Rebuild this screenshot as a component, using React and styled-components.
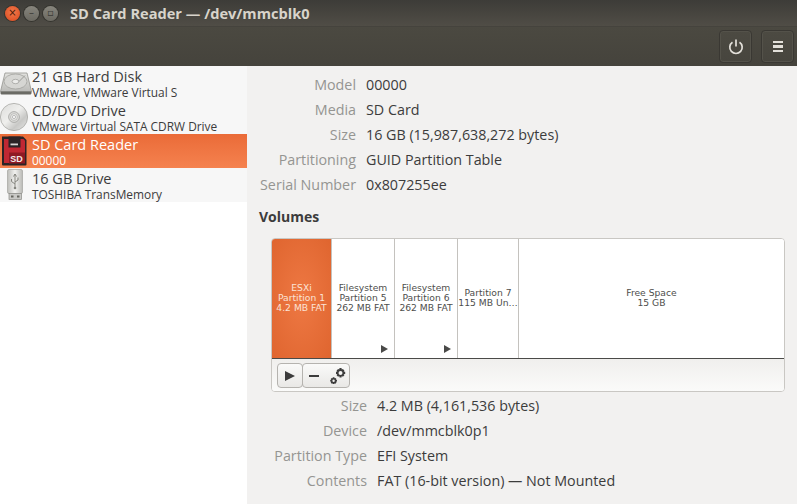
import React from "react";
import styled, { createGlobalStyle } from "styled-components";

const GlobalStyle = createGlobalStyle`
  html, body {
    margin: 0;
    padding: 0;
    height: 100%;
    overflow: hidden;
    background: #f2f1f0;
  }
  #root { height: 100%; }
`;

const drives = [
  { icon: "hdd", name: "21 GB Hard Disk", sub: "VMware, VMware Virtual S" },
  { icon: "disc", name: "CD/DVD Drive", sub: "VMware Virtual SATA CDRW Drive" },
  { icon: "sd", name: "SD Card Reader", sub: "00000", active: true },
  { icon: "usb", name: "16 GB Drive", sub: "TOSHIBA TransMemory" },
];

const driveInfo = [
  ["Model", "00000"],
  ["Media", "SD Card"],
  ["Size", "16 GB (15,987,638,272 bytes)"],
  ["Partitioning", "GUID Partition Table"],
  ["Serial Number", "0x807255ee"],
];

const volumeInfo = [
  ["Size", "4.2 MB (4,161,536 bytes)"],
  ["Device", "/dev/mmcblk0p1"],
  ["Partition Type", "EFI System"],
  ["Contents", "FAT (16-bit version) — Not Mounted"],
];

const segments = [
  { w: 60, lines: ["ESXi", "Partition 1", "4.2 MB FAT"], active: true },
  { w: 63, lines: ["Filesystem", "Partition 5", "262 MB FAT"], arrow: true },
  { w: 63, lines: ["Filesystem", "Partition 6", "262 MB FAT"], arrow: true },
  { w: 61, lines: ["Partition 7", "115 MB Un…"] },
  { w: 265, lines: ["Free Space", "15 GB"], last: true },
];

const HddIcon = () => (
  <svg width="32" height="32" viewBox="0 0 32 32">
    <defs>
      <linearGradient id="hddTop" x1="0" y1="0" x2="0" y2="1">
        <stop offset="0" stopColor="#e2e2df" />
        <stop offset="1" stopColor="#bcbcb9" />
      </linearGradient>
    </defs>
    <path d="M5 6h22l4.500 18.500H.5z" fill="url(#hddTop)" stroke="#94948f" strokeWidth=".8" />
    <ellipse cx="15.500" cy="14.500" rx="11.500" ry="7.500" fill="#d6d6d3" stroke="#a2a29e" strokeWidth=".8" />
    <ellipse cx="15.500" cy="14.500" rx="3.400" ry="2.200" fill="#ececea" stroke="#9a9a96" strokeWidth=".7" />
    <path d="M25 8.500l-6 6" stroke="#9a9a96" strokeWidth="1" fill="none" />
    <path d="M.5 24.500h31v1.500c0 1-1 1.500-1.500 1.500H2c-.7 0-1.500-.5-1.500-1.500z" fill="#6a6a64" />
  </svg>
);

const DiscIcon = () => (
  <svg width="32" height="32" viewBox="0 0 32 32">
    <defs>
      <linearGradient id="discFace" x1="0" y1="0" x2="1" y2="1">
        <stop offset="0" stopColor="#dcdcda" />
        <stop offset=".45" stopColor="#efefed" />
        <stop offset=".7" stopColor="#c8c8c6" />
        <stop offset="1" stopColor="#e8e8e6" />
      </linearGradient>
    </defs>
    <circle cx="14" cy="16" r="13.600" fill="url(#discFace)" stroke="#a8a8a5" strokeWidth=".8" />
    <circle cx="14" cy="16" r="5.400" fill="#dcdcda" stroke="#a2a29f" strokeWidth=".8" />
    <circle cx="14" cy="16" r="3.400" fill="#ececea" stroke="#adadaa" strokeWidth=".7" />
    <circle cx="14" cy="16" r="1.600" fill="#f7f7f6" stroke="#98989a" strokeWidth=".6" />
  </svg>
);

const SdIcon = () => (
  <svg width="32" height="32" viewBox="0 0 32 32">
    <path d="M2 1.500h21l3.500 3.500v24.500a1 1 0 0 1-1 1H3a1 1 0 0 1-1-1z" fill="#2b2326" />
    <path d="M4 4h19.500L25 5.500V28H4z" fill="#c02733" />
    <rect x="8.500" y="1.500" width="12" height="11" fill="#2b2326" />
    <rect x="10.500" y="8.500" width="7.500" height="1.800" fill="#d8d4d4" />
    <rect x="9" y="17.500" width="16" height="11" fill="#8f1a24" />
    <text x="16.500" y="27.200" textAnchor="middle" fontFamily="Liberation Sans, sans-serif" fontWeight="700" fontSize="9" fill="#f4e8e8">SD</text>
  </svg>
);

const UsbIcon = () => (
  <svg width="32" height="32" viewBox="0 0 32 32">
    <defs>
      <linearGradient id="usbBody" x1="0" y1="0" x2="1" y2="0">
        <stop offset="0" stopColor="#bdbdb9" />
        <stop offset=".5" stopColor="#f2f2f0" />
        <stop offset="1" stopColor="#b9b9b5" />
      </linearGradient>
    </defs>
    <rect x="7.500" y=".5" width="15" height="24" rx="1.500" fill="url(#usbBody)" stroke="#a5a5a1" strokeWidth=".7" />
    <path d="M15 5v13M15 5l-1.500 2.500M15 5l1.500 2.500M15 15l-3.500-2.500V10M15 13l3-2V8.500" stroke="#85857f" strokeWidth="1" fill="none" />
    <circle cx="15" cy="19" r="1.300" fill="#85857f" />
    <rect x="9" y="24.500" width="12.500" height="6" fill="#c9c9c6" stroke="#8a8a86" strokeWidth=".7" />
    <rect x="11" y="26.500" width="2.500" height="2" fill="#66665f" />
    <rect x="17" y="26.500" width="2.500" height="2" fill="#66665f" />
  </svg>
);

const driveIcons = { hdd: HddIcon, disc: DiscIcon, sd: SdIcon, usb: UsbIcon };

const PowerIcon = () => (
  <svg width="16" height="16" viewBox="0 0 16 16" fill="none" stroke="#e3e0da" strokeWidth="1.700">
    <path d="M4.500 3.200a6.200 6.200 0 1 0 7 0" />
    <path d="M8 .5v7" />
  </svg>
);

const GearsIcon = () => (
  <svg width="16" height="16" viewBox="0 0 16 16" fill="#3c3c3c">
    <path fillRule="evenodd" d="M9.500 0h2l.3 1.500 1.100-.6 1.500 1.500-.7 1.100 1.500.3v2.100l-1.500.3.700 1.100-1.500 1.500-1.100-.7-.3 1.500h-2l-.3-1.500-1.100.7-1.500-1.500.7-1.100L6 5.900V3.800l1.300-.3-.7-1.100 1.500-1.500 1.100.6zM10.500 2.900a2 2 0 1 0 0 4 2 2 0 0 0 0-4z" />
    <path fillRule="evenodd" d="M2.800 9.300h1.600l.2 1 .8-.4 1.100 1.100-.5.800 1 .2v1.600l-1 .2.500.8-1.100 1.100-.8-.5-.2 1H2.800l-.2-1-.8.5L.7 14.600l.5-.8-1-.2V12l1-.2-.5-.8L1.800 9.900l.8.400zM3.600 11.600a1.200 1.200 0 1 0 0 2.400 1.200 1.200 0 0 0 0-2.400z" />
  </svg>
);

const Window = styled.div`
  display: flex;
  flex-direction: column;
  width: 797px;
  height: 504px;
  overflow: hidden;
  font-family: "Open Sans", "Noto Sans", sans-serif;
`;

const TitleBar = styled.div`
  display: flex;
  align-items: center;
  gap: 4px;
  height: 27px;
  flex: none;
  padding-left: 5px;
  background: linear-gradient(#3d3c38, #504d46);
  border-bottom: 1px solid #45433d;
  box-sizing: border-box;
`;

const WindowButton = styled.span`
  display: flex;
  align-items: center;
  justify-content: center;
  width: 15px;
  height: 15px;
  border-radius: 50%;
  font-family: "DejaVu Sans", sans-serif;
  font-size: 10px;
  line-height: 1;
  color: ${(p) => (p.$close ? "#4a1a08" : "#3b3a36")};
  background: ${(p) =>
    p.$close
      ? "radial-gradient(circle at 50% 40%, #f2794c, #d8481c)"
      : "linear-gradient(#87857d, #6b6961)"};
  box-shadow: 0 0 0 1px #35342f;
`;

const Title = styled.div`
  margin-left: 8px;
  font-size: 14.600px;
  font-weight: 700;
  color: #d8d4cb;
  white-space: nowrap;
`;

const HeaderBar = styled.div`
  display: flex;
  align-items: center;
  justify-content: flex-end;
  gap: 9px;
  height: 39px;
  flex: none;
  padding-right: 3px;
  box-sizing: border-box;
  background: linear-gradient(#4b4941, #45433c);
`;

const HeaderButton = styled.div`
  display: flex;
  align-items: center;
  justify-content: center;
  width: 33px;
  height: 33px;
  box-sizing: border-box;
  border: 1px solid #3a3833;
  border-radius: 4px;
  background: linear-gradient(#4c4a42, #47453e);
  box-shadow: inset 0 0 0 1px #54524a;
`;

const MenuBars = styled.div`
  display: flex;
  flex-direction: column;
  gap: 2px;

  span {
    display: block;
    width: 10px;
    height: 2.500px;
    background: #e3e0da;
  }
`;

const Body = styled.div`
  display: flex;
  flex: 1;
  min-height: 0;
  background: #f2f1f0;
`;

const Sidebar = styled.div`
  width: 247px;
  flex: none;
  background: #ffffff;
`;

const DriveRow = styled.div`
  display: flex;
  align-items: center;
  height: 34px;
  background: ${(p) => (p.$active ? "linear-gradient(#ea6b38, #f5824f)" : "#f7f7f7")};
  color: ${(p) => (p.$active ? "#ffffff" : "#3c3c3c")};
`;

const DriveIcon = styled.div`
  display: flex;
  width: 32px;
  height: 32px;
  flex: none;
`;

const DriveText = styled.div`
  display: flex;
  flex-direction: column;
  padding-top: 1px;
  white-space: nowrap;
`;

const DriveName = styled.div`
  font-size: 14.500px;
  line-height: 16px;
`;

const DriveSub = styled.div`
  font-size: 11.900px;
  line-height: 14px;
`;

const Details = styled.div`
  flex: 1;
  min-width: 0;
  padding: 6px 12px 0;
`;

const InfoGrid = styled.div`
  display: grid;
  grid-template-columns: ${(p) => p.$label}px 1fr;
  column-gap: 10px;
  grid-auto-rows: 25px;
  align-items: center;
  font-size: 14.300px;
`;

const InfoLabel = styled.div`
  text-align: right;
  color: #959592;
  white-space: nowrap;
`;

const InfoValue = styled.div`
  color: #3c3c3c;
  white-space: nowrap;
`;

const SectionTitle = styled.div`
  margin-top: 8px;
  height: 24px;
  line-height: 24px;
  font-size: 14px;
  font-weight: 700;
  color: #3c3c3c;
`;

const VolumeBox = styled.div`
  margin: 9px 0 0 12px;
  width: 514px;
  height: 154px;
  box-sizing: border-box;
  border: 1px solid #c9c7c3;
  border-radius: 4px;
  overflow: hidden;
  background: #ffffff;
`;

const SegmentRow = styled.div`
  display: flex;
  height: 119px;
  border-bottom: 1px solid #4a4a48;
`;

const Segment = styled.div`
  position: relative;
  display: flex;
  flex-direction: column;
  align-items: center;
  justify-content: center;
  box-sizing: border-box;
  flex: none;
  padding-bottom: 1px;
  font-family: "DejaVu Sans", sans-serif;
  font-size: 9.200px;
  line-height: 10px;
  white-space: nowrap;
  color: ${(p) => (p.$active ? "#fbe3d6" : "#4e4e4c")};
  background: ${(p) =>
    p.$active ? "radial-gradient(ellipse at center, #ee7843, #df652f)" : "#ffffff"};
  border-right: ${(p) => (p.$last ? "none" : "1px solid #c4c2be")};
`;

const SegmentArrow = styled.span`
  position: absolute;
  right: 6px;
  bottom: 5px;
  width: 0;
  height: 0;
  border-left: 7px solid #4a4a48;
  border-top: 4px solid transparent;
  border-bottom: 4px solid transparent;
`;

const Toolbar = styled.div`
  display: flex;
  align-items: center;
  height: 33px;
  padding-left: 5px;
  background: linear-gradient(#f0efed, #fbfbfa);
`;

const ToolGroup = styled.div`
  display: flex;
  align-items: center;
  justify-content: ${(p) => (p.$wide ? "space-between" : "center")};
  box-sizing: border-box;
  width: ${(p) => (p.$wide ? 48 : 26)}px;
  height: 25px;
  padding: ${(p) => (p.$wide ? "0 3px 0 6px" : "0")};
  margin-left: ${(p) => (p.$wide ? "-1px" : "0")};
  border: 1px solid #b5b3af;
  border-radius: 4px;
  background: linear-gradient(#fafaf9, #e9e8e6);
`;

const PlayGlyph = styled.span`
  width: 0;
  height: 0;
  border-left: 10px solid #3c3c3c;
  border-top: 5.500px solid transparent;
  border-bottom: 5.500px solid transparent;
`;

const MinusGlyph = styled.span`
  width: 10px;
  height: 2px;
  background: #3c3c3c;
`;

const SubGridWrap = styled.div`
  margin-top: 1px;
`;

const App = () => (
  <Window>
    <GlobalStyle />
    <TitleBar>
      <WindowButton $close>×</WindowButton>
      <WindowButton>–</WindowButton>
      <WindowButton>▫</WindowButton>
      <Title>SD Card Reader — /dev/mmcblk0</Title>
    </TitleBar>
    <HeaderBar>
      <HeaderButton>
        <PowerIcon />
      </HeaderButton>
      <HeaderButton>
        <MenuBars>
          <span />
          <span />
          <span />
        </MenuBars>
      </HeaderButton>
    </HeaderBar>
    <Body>
      <Sidebar>
        {drives.map((d) => {
          const Icon = driveIcons[d.icon];
          return (
            <DriveRow key={d.name} $active={d.active}>
              <DriveIcon>
                <Icon />
              </DriveIcon>
              <DriveText>
                <DriveName>{d.name}</DriveName>
                <DriveSub>{d.sub}</DriveSub>
              </DriveText>
            </DriveRow>
          );
        })}
      </Sidebar>
      <Details>
        <InfoGrid $label={97}>
          {driveInfo.map(([k, v]) => (
            <React.Fragment key={k}>
              <InfoLabel>{k}</InfoLabel>
              <InfoValue>{v}</InfoValue>
            </React.Fragment>
          ))}
        </InfoGrid>
        <SectionTitle>Volumes</SectionTitle>
        <VolumeBox>
          <SegmentRow>
            {segments.map((s) => (
              <Segment key={s.lines.join()} $active={s.active} $last={s.last} style={{ width: s.w }}>
                {s.lines.map((l) => (
                  <div key={l}>{l}</div>
                ))}
                {s.arrow && <SegmentArrow />}
              </Segment>
            ))}
          </SegmentRow>
          <Toolbar>
            <ToolGroup>
              <PlayGlyph />
            </ToolGroup>
            <ToolGroup $wide>
              <MinusGlyph />
              <GearsIcon />
            </ToolGroup>
          </Toolbar>
        </VolumeBox>
        <SubGridWrap>
          <InfoGrid $label={108}>
            {volumeInfo.map(([k, v]) => (
              <React.Fragment key={k}>
                <InfoLabel>{k}</InfoLabel>
                <InfoValue>{v}</InfoValue>
              </React.Fragment>
            ))}
          </InfoGrid>
        </SubGridWrap>
      </Details>
    </Body>
  </Window>
);

export default App;
